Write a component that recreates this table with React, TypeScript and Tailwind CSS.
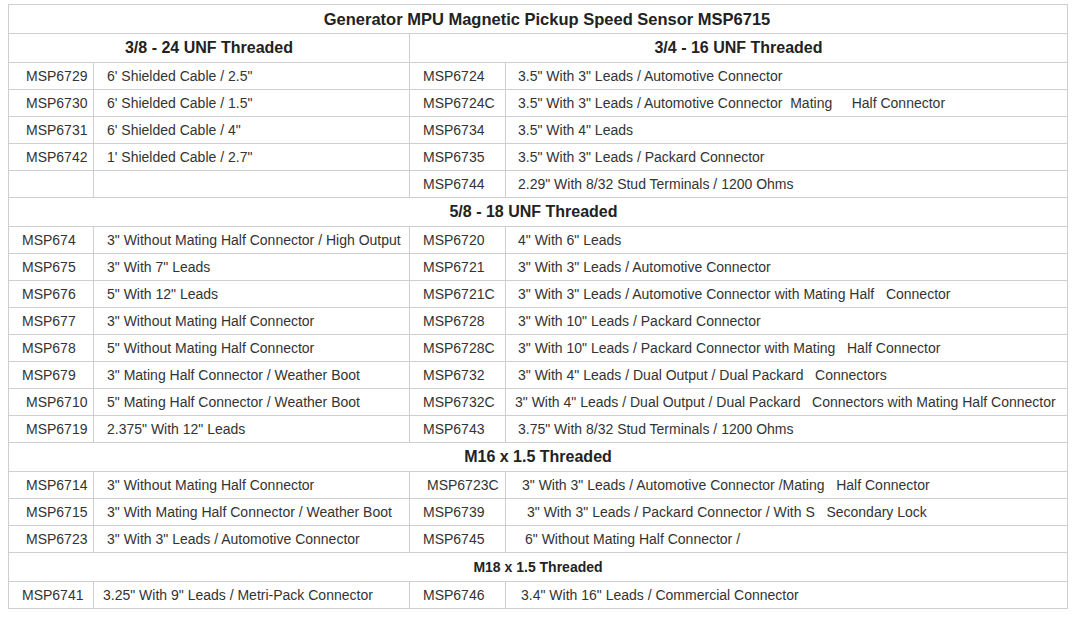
import React from 'react';

type Row = {
  lc: string;
  ld: string;
  rc: string;
  rd: string;
  // padding classes for each cell (text in the source sits at uneven offsets)
  p: [string, string, string, string];
};

const A = 'pl-[17px]';
const B = 'pl-[13px]';

const sec1: Row[] = [
  { lc: 'MSP6729', ld: '6\' Shielded Cable / 2.5"', rc: 'MSP6724', rd: '3.5" With 3" Leads / Automotive Connector', p: [A, B, B, 'pl-[12px]'] },
  { lc: 'MSP6730', ld: '6\' Shielded Cable / 1.5"', rc: 'MSP6724C', rd: '3.5" With 3" Leads / Automotive Connector  Mating     Half Connector', p: [A, B, B, 'pl-[12px]'] },
  { lc: 'MSP6731', ld: '6\' Shielded Cable / 4"', rc: 'MSP6734', rd: '3.5" With 4" Leads', p: [A, B, B, 'pl-[12px]'] },
  { lc: 'MSP6742', ld: '1\' Shielded Cable / 2.7"', rc: 'MSP6735', rd: '3.5" With 3" Leads / Packard Connector', p: [A, B, B, 'pl-[12px]'] },
  { lc: '', ld: '', rc: 'MSP6744', rd: '2.29" With 8/32 Stud Terminals / 1200 Ohms', p: [A, B, B, 'pl-[12px]'] },
];

const sec2: Row[] = [
  { lc: 'MSP674', ld: '3" Without Mating Half Connector / High Output', rc: 'MSP6720', rd: '4" With 6" Leads', p: [B, B, B, 'pl-[12px]'] },
  { lc: 'MSP675', ld: '3" With 7" Leads', rc: 'MSP6721', rd: '3" With 3" Leads / Automotive Connector', p: [B, B, B, 'pl-[12px]'] },
  { lc: 'MSP676', ld: '5" With 12" Leads', rc: 'MSP6721C', rd: '3" With 3" Leads / Automotive Connector with Mating Half   Connector', p: [B, B, B, 'pl-[12px]'] },
  { lc: 'MSP677', ld: '3" Without Mating Half Connector', rc: 'MSP6728', rd: '3" With 10" Leads / Packard Connector', p: [B, B, B, 'pl-[12px]'] },
  { lc: 'MSP678', ld: '5" Without Mating Half Connector', rc: 'MSP6728C', rd: '3" With 10" Leads / Packard Connector with Mating   Half Connector', p: [B, B, B, 'pl-[12px]'] },
  { lc: 'MSP679', ld: '3" Mating Half Connector / Weather Boot', rc: 'MSP6732', rd: '3" With 4" Leads / Dual Output / Dual Packard   Connectors', p: [B, B, B, 'pl-[12px]'] },
  { lc: 'MSP6710', ld: '5" Mating Half Connector / Weather Boot', rc: 'MSP6732C', rd: '3" With 4" Leads / Dual Output / Dual Packard   Connectors with Mating Half Connector', p: [A, B, B, 'pl-[9px]'] },
  { lc: 'MSP6719', ld: '2.375" With 12" Leads', rc: 'MSP6743', rd: '3.75" With 8/32 Stud Terminals / 1200 Ohms', p: [A, B, B, 'pl-[12px]'] },
];

const sec3: Row[] = [
  { lc: 'MSP6714', ld: '3" Without Mating Half Connector', rc: 'MSP6723C', rd: '3" With 3" Leads / Automotive Connector /Mating   Half Connector', p: [A, B, A, 'pl-[16px]'] },
  { lc: 'MSP6715', ld: '3" With Mating Half Connector / Weather Boot', rc: 'MSP6739', rd: '3" With 3" Leads / Packard Connector / With S   Secondary Lock', p: [A, B, B, 'pl-[21px]'] },
  { lc: 'MSP6723', ld: '3" With 3" Leads / Automotive Connector', rc: 'MSP6745', rd: '6" Without Mating Half Connector /', p: [A, B, B, 'pl-[19px]'] },
];

const sec4: Row[] = [
  { lc: 'MSP6741', ld: '3.25" With 9" Leads / Metri-Pack Connector', rc: 'MSP6746', rd: '3.4" With 16" Leads / Commercial Connector', p: [B, 'pl-[9px]', B, 'pl-[15px]'] },
];

const cell = 'bg-white h-[26px] flex items-center whitespace-pre text-[14px] text-[#333]';

const DataRows = ({ rows }: { rows: Row[] }) => (
  <>
    {rows.map((r, i) => (
      <React.Fragment key={i}>
        <div className={`${cell} ${r.p[0]}`}>{r.lc}</div>
        <div className={`${cell} ${r.p[1]}`}>{r.ld}</div>
        <div className={`${cell} ${r.p[2]}`}>{r.rc}</div>
        <div className={`${cell} ${r.p[3]}`}>{r.rd}</div>
      </React.Fragment>
    ))}
  </>
);

const head = 'bg-white h-[28px] flex items-center justify-center font-bold text-[16px] text-[#222]';

export default function App() {
  return (
    <div className="min-h-screen bg-white font-['Liberation_Sans',Arial,sans-serif] pt-[4px] pl-[8px]">
      <div className="w-[1060px] grid grid-cols-[84px_315px_95px_561px] gap-px bg-[#cfcfcf] p-px">
        <div className="bg-white h-[28px] col-span-4 flex items-center justify-center pl-[18px] font-bold text-[16.5px] text-[#222]">
          Generator MPU Magnetic Pickup Speed Sensor MSP6715
        </div>

        <div className={`${head} col-span-2`}>3/8 - 24 UNF Threaded</div>
        <div className={`${head} col-span-2`}>3/4 - 16 UNF Threaded</div>
        <DataRows rows={sec1} />

        <div className={`${head} col-span-4 pr-[9px]`}>5/8 - 18 UNF Threaded</div>
        <DataRows rows={sec2} />

        <div className={`${head} col-span-4`}>M16 x 1.5 Threaded</div>
        <DataRows rows={sec3} />

        <div className="bg-white h-[28px] col-span-4 flex items-center justify-center font-bold text-[14px] text-[#222]">
          M18 x 1.5 Threaded
        </div>
        <DataRows rows={sec4} />
      </div>
    </div>
  );
}
